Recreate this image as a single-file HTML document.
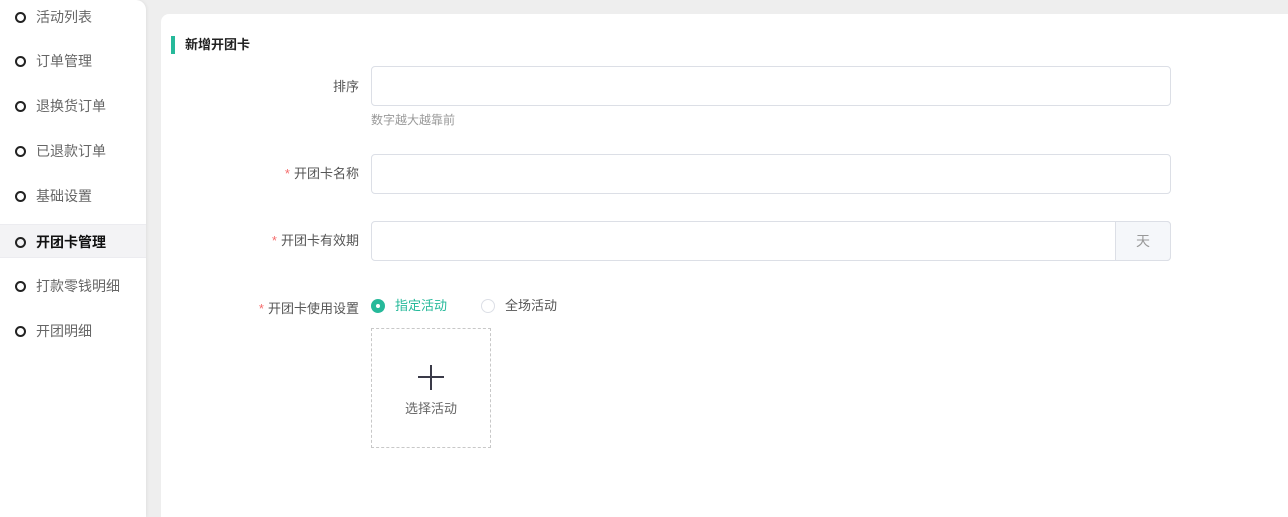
<!DOCTYPE html>
<html style="overflow:hidden;height:517px"><head><meta charset="utf-8"><style>
*{box-sizing:border-box;margin:0;padding:0}
body{width:1288px;height:517px;background:#eeeeee;font-family:"Liberation Sans","Noto Sans CJK SC",sans-serif;font-size:14px;color:#606266;position:relative;overflow:hidden}
.side{position:absolute;left:0;top:0;width:146px;height:517px;background:#fff;border-top-right-radius:10px;box-shadow:1px 0 3px rgba(0,0,0,.06)}
.item{position:absolute;left:0;width:146px;height:34px;line-height:34px;padding-left:36px;color:#666;font-size:14px}
.item:before{content:"";position:absolute;left:15px;top:12px;width:7px;height:7px;border:2px solid #222;border-radius:50%}
.item.act{background:#f3f3f5;color:#111;font-weight:bold;border-top:1px solid #ececf0;border-bottom:1px solid #ececf0}
.card{position:absolute;left:161px;top:14px;width:1127px;height:503px;background:#fff;border-radius:8px 0 0 0}
.title{position:absolute;left:10px;top:22px;height:18px;border-left:4px solid #26b99a;padding-left:10px;font-weight:bold;color:#222;font-size:13px;line-height:18px}
.lbl{position:absolute;right:929px;font-size:13px;color:#555;white-space:nowrap}
.lbl b{color:#f56c6c;font-weight:normal;margin-right:4px}
.inp{position:absolute;left:210px;width:800px;height:40px;border:1px solid #dcdfe6;border-radius:4px;background:#fff}
.sfx{position:absolute;right:-1px;top:-1px;width:56px;height:40px;border:1px solid #dcdfe6;border-radius:0 4px 4px 0;background:#f5f7fa;color:#999;text-align:center;line-height:38px}
.tip{position:absolute;left:210px;top:97px;font-size:12px;color:#999}
.r{position:absolute;top:284px;font-size:13px;line-height:16px}
.dot{position:absolute;top:285px;width:14px;height:14px;border-radius:50%}
.box{position:absolute;left:210px;top:314px;width:120px;height:120px;border:1px dashed #c8c8c8}
</style></head><body>
<div class="side">
<div class="item" style="top:0">活动列表</div>
<div class="item" style="top:44px">订单管理</div>
<div class="item" style="top:89px">退换货订单</div>
<div class="item" style="top:134px">已退款订单</div>
<div class="item" style="top:179px">基础设置</div>
<div class="item act" style="top:224px">开团卡管理</div>
<div class="item" style="top:269px">打款零钱明细</div>
<div class="item" style="top:314px">开团明细</div>
</div>
<div class="card">
<div class="title">新增开团卡</div>
<div class="lbl" style="top:62px">排序</div>
<div class="inp" style="top:52px"></div>
<div class="tip">数字越大越靠前</div>
<div class="lbl" style="top:149px"><b>*</b>开团卡名称</div>
<div class="inp" style="top:140px"></div>
<div class="lbl" style="top:216px"><b>*</b>开团卡有效期</div>
<div class="inp" style="top:207px"><div class="sfx">天</div></div>
<div class="lbl" style="top:284px"><b>*</b>开团卡使用设置</div>
<div class="dot" style="left:210px;background:#26b99a"><div style="position:absolute;left:5px;top:5px;width:4px;height:4px;border-radius:50%;background:#fff"></div></div>
<div class="r" style="left:234px;color:#26b99a">指定活动</div>
<div class="dot" style="left:320px;border:1px solid #dcdfe6"></div>
<div class="r" style="left:344px;color:#555">全场活动</div>
<div class="box">
<div style="position:absolute;left:46px;top:47px;width:26px;height:2px;background:#3a3a48"></div>
<div style="position:absolute;left:58px;top:36px;width:2px;height:25px;background:#3a3a48"></div>
<div style="position:absolute;left:0;width:118px;top:69px;text-align:center;font-size:13px;color:#666">选择活动</div>
</div>
</div>
</body></html>
